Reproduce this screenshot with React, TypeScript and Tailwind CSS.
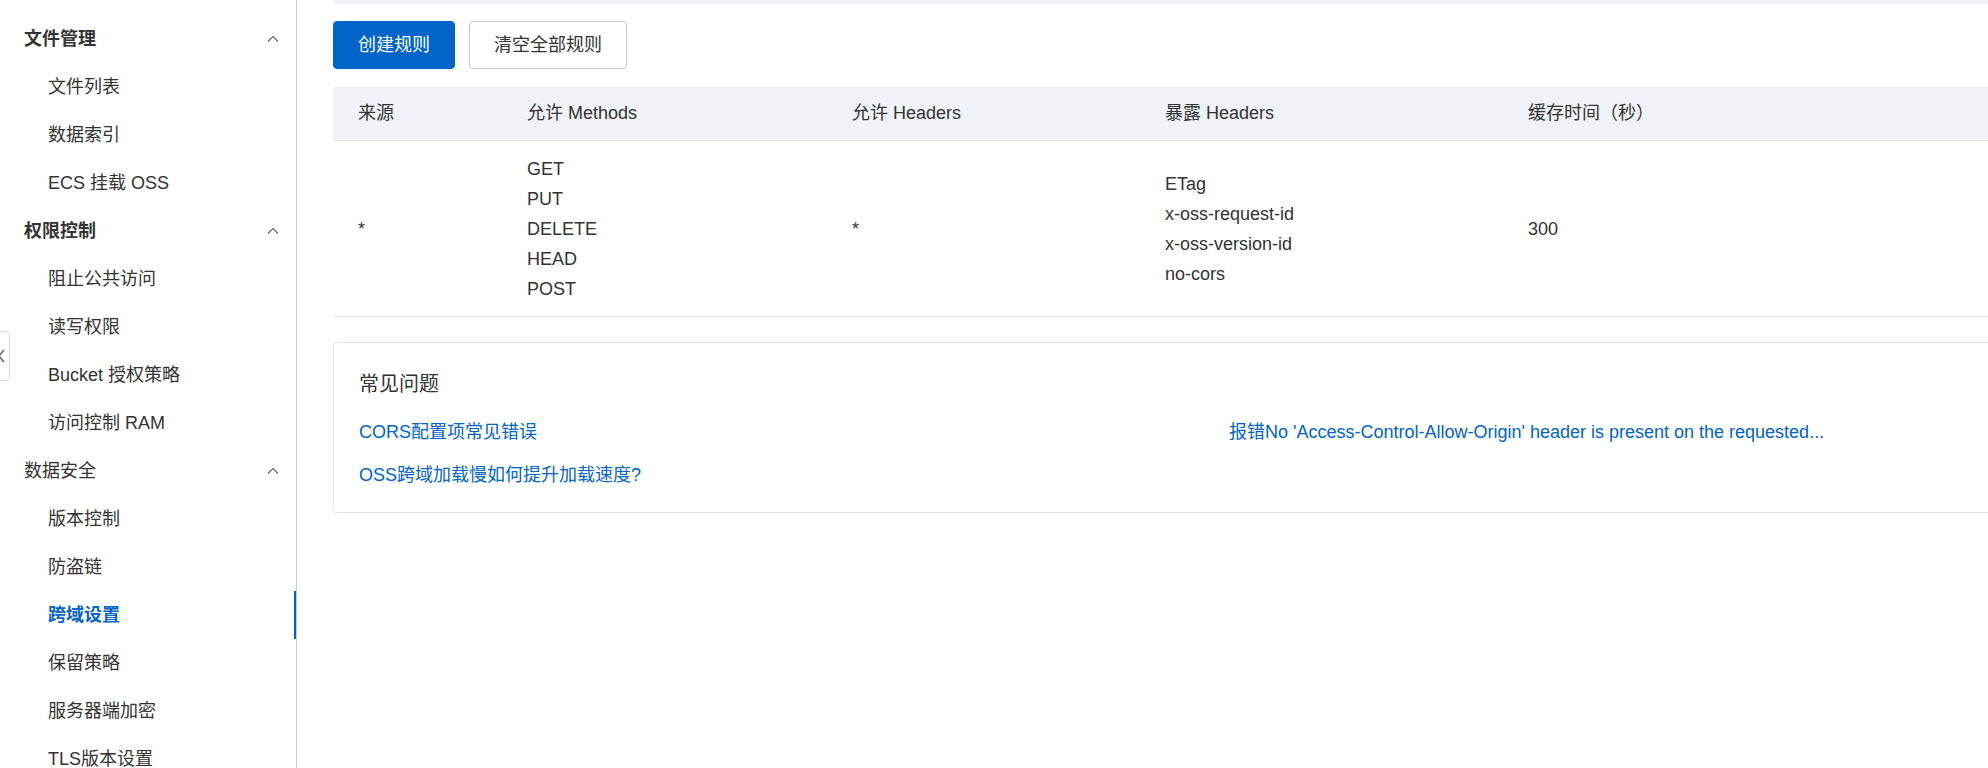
const font = "font-['Liberation_Sans','Noto_Sans_CJK_SC',sans-serif]";

type NavGroup = {
  title: string;
  bold: boolean;
  items: string[];
};

const groups: NavGroup[] = [
  { title: "文件管理", bold: true, items: ["文件列表", "数据索引", "ECS 挂载 OSS"] },
  {
    title: "权限控制",
    bold: true,
    items: ["阻止公共访问", "读写权限", "Bucket 授权策略", "访问控制 RAM"],
  },
  {
    title: "数据安全",
    bold: false,
    items: ["版本控制", "防盗链", "跨域设置", "保留策略", "服务器端加密", "TLS版本设置"],
  },
];

const active = "跨域设置";

function ChevronUp() {
  return (
    <svg width="14" height="14" viewBox="0 0 14 14" fill="none" className="text-[#666]">
      <polyline points="2,9.5 7,4.5 12,9.5" stroke="currentColor" strokeWidth="1.2" />
    </svg>
  );
}

function Sidebar() {
  return (
    <aside className="relative w-[297px] shrink-0 border-r border-[#c9ced6] bg-white pt-[15px]">
      {groups.map((g) => (
        <div key={g.title}>
          <div className="flex h-12 items-center justify-between pl-6 pr-4">
            <span className={g.bold ? "font-bold" : ""}>{g.title}</span>
            <ChevronUp />
          </div>
          {g.items.map((item) => (
            <div
              key={item}
              className={
                "relative flex h-12 items-center pl-12 " +
                (item === active ? "font-bold text-[#0064c8]" : "")
              }
            >
              {item}
              {item === active && (
                <span className="absolute right-0 top-0 h-12 w-[2px] bg-[#0064c8]" />
              )}
            </div>
          ))}
        </div>
      ))}
      {/* collapse handle, mostly off-screen */}
      <div className="absolute left-[-22px] top-[331px] h-[50px] w-[32px] rounded-r border border-[#d5d9df] bg-white">
        <svg
          width="8"
          height="16"
          viewBox="0 0 8 16"
          fill="none"
          className="absolute left-[19px] top-[16px] text-[#808080]"
        >
          <polyline points="6,2 1,8 6,14" stroke="currentColor" strokeWidth="2" />
        </svg>
      </div>
    </aside>
  );
}

const methods = ["GET", "PUT", "DELETE", "HEAD", "POST"];
const exposed = ["ETag", "x-oss-request-id", "x-oss-version-id", "no-cors"];

function RulesTable() {
  const cols = "grid grid-cols-[169px_325px_313px_363px_1fr]";
  return (
    <div className="mt-[18px]">
      <div className={cols + " h-[54px] items-center border-b border-[#e3e6eb] bg-[#eff2f6]"}>
        <div className="pl-[25px]">来源</div>
        <div className="pl-[25px]">允许 Methods</div>
        <div className="pl-[25px]">允许 Headers</div>
        <div className="pl-[25px]">暴露 Headers</div>
        <div className="pl-[25px]">缓存时间（秒）</div>
      </div>
      <div className={cols + " items-center border-b border-[#e5e5e5] pt-[13px] pb-[12px] leading-[30px]"}>
        <div className="pl-[25px]">*</div>
        <div className="pl-[25px]">
          {methods.map((m) => (
            <div key={m}>{m}</div>
          ))}
        </div>
        <div className="pl-[25px]">*</div>
        <div className="pl-[25px]">
          {exposed.map((h) => (
            <div key={h}>{h}</div>
          ))}
        </div>
        <div className="pl-[25px]">300</div>
      </div>
    </div>
  );
}

function Faq() {
  return (
    <div className="mt-[25px] rounded border border-[#e3e3e3] bg-white pt-[27px] pb-[24px] pl-[25px]">
      <div className="text-[20px] leading-[28px]">常见问题</div>
      <div className="mt-[21px] grid grid-cols-[870px_1fr] gap-y-[17px] leading-[26px] text-[#0064c8]">
        <a className="cursor-pointer">CORS配置项常见错误</a>
        <a className="cursor-pointer">
          报错No 'Access-Control-Allow-Origin' header is present on the requested...
        </a>
        <a className="cursor-pointer">OSS跨域加载慢如何提升加载速度?</a>
      </div>
    </div>
  );
}

export default function App() {
  return (
    <div className={font + " flex h-[768px] overflow-hidden bg-white text-[18px] text-[#333]"}>
      <Sidebar />
      <main className="min-w-0 flex-1 overflow-hidden pl-9">
        <div className="w-[1700px]">
          <div className="h-[4px] rounded-b bg-[#eff2f6]" />
          <div className="mt-[17px] flex gap-[14px]">
            <button className="h-12 rounded-sm border border-[#0064c8] bg-[#0064c8] px-6 text-white">
              创建规则
            </button>
            <button className="h-12 rounded-sm border border-[#c3c8cf] bg-white px-6 text-[#333]">
              清空全部规则
            </button>
          </div>
          <RulesTable />
          <Faq />
        </div>
      </main>
    </div>
  );
}
